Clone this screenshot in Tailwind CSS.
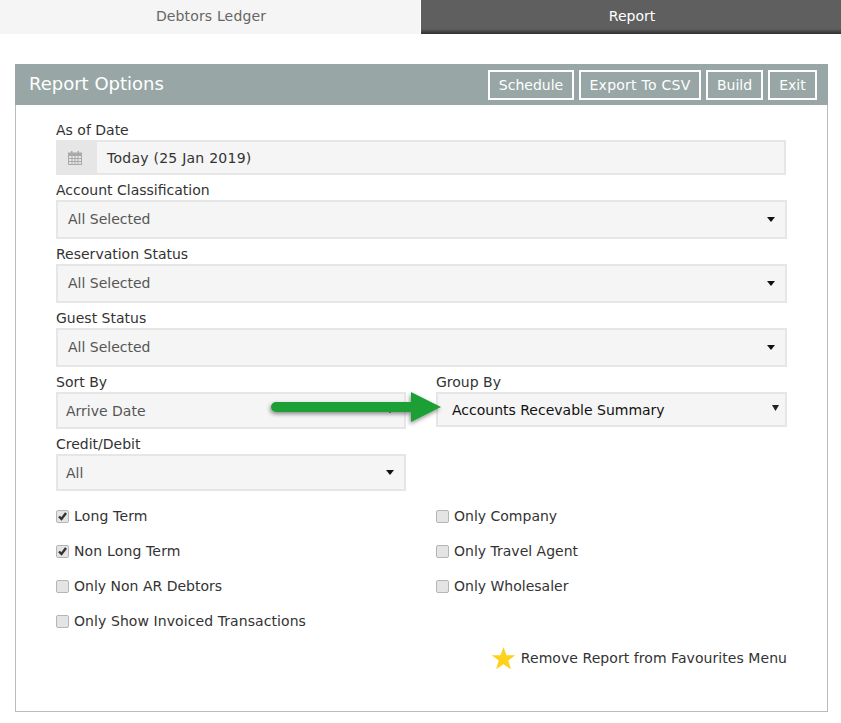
<!DOCTYPE html>
<html lang="en">
<head>
  <meta charset="UTF-8" />
  <title>Report Options</title>
  <script src="https://cdn.jsdelivr.net/npm/@tailwindcss/browser@4"></script>
</head>
<body class="bg-white text-[#333] font-['DejaVu_Sans',sans-serif] text-[14px] overflow-hidden">

  <!-- tabs -->
  <div class="flex h-[34px]">
    <div class="w-[420px] bg-[#f5f5f5] text-[#666] tracking-[0.15px] flex items-center justify-center pb-[2px] pl-[2px]">Debtors Ledger</div>
    <div class="w-[1px]"></div>
    <div class="w-[420px] bg-gradient-to-b from-[#5f5f5f] via-[#5f5f5f] via-85% to-[#2f2f2f] text-white flex items-center justify-center pb-[2px] pl-[2px]">Report</div>
  </div>

  <!-- panel -->
  <div class="relative mt-[30px] mx-[15px] w-[813px] h-[648px] border border-[#b4bfbd] border-t-0">
    <div class="-mx-px h-[41px] bg-[#98a7a5] flex items-center justify-between pl-[14px] pr-[11px]">
      <span class="text-white text-[18px] pb-[2px]">Report Options</span>
      <div class="flex gap-[5px]">
        <button class="h-[30px] w-[86px] pt-[1px] border-2 border-white text-white">Schedule</button>
        <button class="h-[30px] w-[122px] pt-[1px] border-2 border-white text-white tracking-[0.25px]">Export To CSV</button>
        <button class="h-[30px] w-[57px] pt-[1px] border-2 border-white text-white">Build</button>
        <button class="h-[30px] w-[49px] pt-[1px] border-2 border-white text-white">Exit</button>
      </div>
    </div>

    <div class="pt-[15px] pl-[40px] w-[771px]">
      <label class="block h-[20px] leading-[20px]">As of Date</label>
      <div class="flex h-[35px] w-[730px] bg-[#f5f5f5] border-2 border-[#e6e6e6]">
        <div class="w-[41px] -ml-[2px] -my-[2px] h-[35px] bg-[#e6e6e6] flex items-center justify-center pr-[3px]">
          <svg width="14" height="14" viewBox="0 0 14 14" fill="#a9a9a9">
            <path d="M3 0h1.500v2.500H3zM9.500 0H11v2.500H9.500z"/>
            <path fill-rule="evenodd" d="M0 1.500h14V14H0zM1 5v2h2.500V5zM4.500 5v2H6.500V5zM7.500 5v2h2V5zM10.500 5v2H13V5zM1 8v2h2.500V8zM4.500 8v2H6.500V8zM7.500 8v2h2V8zM10.500 8v2H13V8zM1 11v2h2.500v-2zM4.500 11v2H6.500v-2zM7.500 11v2h2v-2zM10.500 11v2H13v-2z"/>
          </svg>
        </div>
        <div class="pl-[10px] pt-[1px] flex items-center tracking-[0.25px]">Today (25 Jan 2019)</div>
      </div>

      <label class="block mt-[5px] h-[20px] leading-[20px]">Account Classification</label>
      <div class="flex items-center justify-between h-[39px] w-[731px] bg-[#f5f5f5] border-2 border-[#e6e6e6] pl-[10px] pr-[10px]">
        <span class="text-[#555]">All Selected</span>
        <svg width="8" height="5" viewBox="0 0 8 5"><path d="M0 0h8L4 5z" fill="#111"/></svg>
      </div>

      <label class="block mt-[5px] h-[20px] leading-[20px]">Reservation Status</label>
      <div class="flex items-center justify-between h-[39px] w-[731px] bg-[#f5f5f5] border-2 border-[#e6e6e6] pl-[10px] pr-[10px]">
        <span class="text-[#555]">All Selected</span>
        <svg width="8" height="5" viewBox="0 0 8 5"><path d="M0 0h8L4 5z" fill="#111"/></svg>
      </div>

      <label class="block mt-[5px] h-[20px] leading-[20px]">Guest Status</label>
      <div class="flex items-center justify-between h-[39px] w-[731px] bg-[#f5f5f5] border-2 border-[#e6e6e6] pl-[10px] pr-[10px]">
        <span class="text-[#555]">All Selected</span>
        <svg width="8" height="5" viewBox="0 0 8 5"><path d="M0 0h8L4 5z" fill="#111"/></svg>
      </div>

      <div class="mt-[5px] grid grid-cols-[350px_351px] gap-x-[30px] w-[731px]">
        <div>
          <label class="block h-[20px] leading-[20px]">Sort By</label>
          <div class="flex items-center justify-between h-[37px] bg-[#f5f5f5] border-2 border-[#e6e6e6] pl-[8px] pr-[10px]">
            <span class="text-[#555] pt-[1px]">Arrive Date</span>
            <svg width="8" height="5" viewBox="0 0 8 5"><path d="M0 0h8L4 5z" fill="#111"/></svg>
          </div>
        </div>
        <div>
          <label class="block h-[20px] leading-[20px]">Group By</label>
          <div class="flex items-center justify-between h-[35px] bg-[#f5f5f5] border-2 border-[#e6e6e6] pl-[14px] pr-[6px]">
            <span class="text-[#111] pt-[1px]">Accounts Recevable Summary</span>
            <svg class="-mt-[3px]" width="7" height="6" viewBox="0 0 7 6"><path d="M0 0h7L3.500 6z" fill="#222"/></svg>
          </div>
        </div>
      </div>

      <label class="block mt-[5px] h-[20px] leading-[20px]">Credit/Debit</label>
      <div class="flex items-center justify-between h-[37px] w-[350px] bg-[#f5f5f5] border-2 border-[#e6e6e6] pl-[8px] pr-[10px]">
        <span class="text-[#555] pt-[1px]">All</span>
        <svg width="8" height="5" viewBox="0 0 8 5"><path d="M0 0h8L4 5z" fill="#111"/></svg>
      </div>

      <!-- checkboxes -->
      <div class="mt-[8px] grid grid-cols-[380px_351px] auto-rows-[35px] w-[731px]">
        <label class="flex items-center gap-[5px] tracking-[0.15px]">
          <span class="w-[13px] h-[13px] rounded-[2px] border border-[#b5b5b5] bg-[#e4e4e4] flex items-center justify-center"><svg width="11" height="11" viewBox="0 0 11 11"><path d="M2 5.500l2.500 2.500 4.500-6" fill="none" stroke="#333" stroke-width="2.400"/></svg></span>
          <span>Long Term</span>
        </label>
        <label class="flex items-center gap-[5px]">
          <span class="w-[13px] h-[13px] rounded-[2px] border border-[#b5b5b5] bg-[#e4e4e4]"></span>
          <span>Only Company</span>
        </label>
        <label class="flex items-center gap-[5px] tracking-[0.15px]">
          <span class="w-[13px] h-[13px] rounded-[2px] border border-[#b5b5b5] bg-[#e4e4e4] flex items-center justify-center"><svg width="11" height="11" viewBox="0 0 11 11"><path d="M2 5.500l2.500 2.500 4.500-6" fill="none" stroke="#333" stroke-width="2.400"/></svg></span>
          <span>Non Long Term</span>
        </label>
        <label class="flex items-center gap-[5px]">
          <span class="w-[13px] h-[13px] rounded-[2px] border border-[#b5b5b5] bg-[#e4e4e4]"></span>
          <span>Only Travel Agent</span>
        </label>
        <label class="flex items-center gap-[5px]">
          <span class="w-[13px] h-[13px] rounded-[2px] border border-[#b5b5b5] bg-[#e4e4e4]"></span>
          <span>Only Non AR Debtors</span>
        </label>
        <label class="flex items-center gap-[5px]">
          <span class="w-[13px] h-[13px] rounded-[2px] border border-[#b5b5b5] bg-[#e4e4e4]"></span>
          <span>Only Wholesaler</span>
        </label>
        <label class="flex items-center gap-[5px] col-span-2 tracking-[0.08px]">
          <span class="w-[13px] h-[13px] rounded-[2px] border border-[#b5b5b5] bg-[#e4e4e4]"></span>
          <span>Only Show Invoiced Transactions</span>
        </label>
      </div>

      <div class="mt-[4px] flex items-center justify-end gap-[5px] w-[731px] h-[30px] tracking-[0.06px]">
        <svg width="25" height="25" viewBox="0 0 25 25"><path d="M12.500 1l3 8.300h8.800l-7 5.300 2.600 8.700-7.400-5.100-7.400 5.100 2.600-8.700-7-5.300h8.800z" fill="#fcd21c"/></svg>
        <span>Remove Report from Favourites Menu</span>
      </div>
    </div>

    <!-- green callout arrow -->
    <svg class="absolute left-[250px] top-[327px]" width="180" height="50" viewBox="0 0 180 50">
      <defs><filter id="s" x="-10%" y="-30%" width="120%" height="170%"><feDropShadow dx="-1" dy="2" stdDeviation="2" flood-color="#000" flood-opacity=".45"/></filter></defs>
      <path d="M10 11h135V1l30 15-30 15V21H10a5 5 0 0 1 0-10z" fill="#1e9f34" filter="url(#s)"/>
    </svg>
  </div>
</body>
</html>
